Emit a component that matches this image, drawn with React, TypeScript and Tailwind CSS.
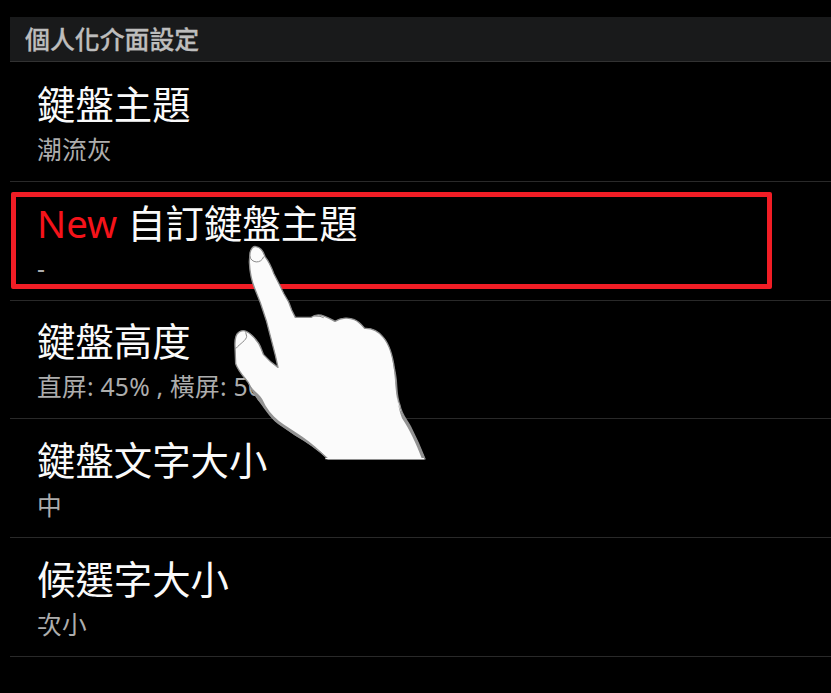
import React from "react";

type Setting = { title: string; summary: string; isNew?: boolean; height: string };

const settings: Setting[] = [
  { title: "鍵盤主題", summary: "潮流灰", height: "h-[120px] pt-[20px]" },
  { title: "自訂鍵盤主題", summary: "-", isNew: true, height: "h-[119px] pt-[19px]" },
  { title: "鍵盤高度", summary: "直屏: 45% , 橫屏: 50%", height: "h-[118px] pt-[18px]" },
  { title: "鍵盤文字大小", summary: "中", height: "h-[119px] pt-[19px]" },
  { title: "候選字大小", summary: "次小", height: "h-[119px] pt-[19px]" },
];

function SettingRow({ title, summary, isNew, height }: Setting) {
  return (
    <li className={`${height} border-b border-[#292929] pl-[27px] whitespace-nowrap`}>
      <div className="h-[45px] text-[38.4px] leading-[45px] text-[#fafafa]">
        {isNew && <span className="text-[#f5131a]">New </span>}
        {title}
      </div>
      <div className="h-[46px] text-[24.7px] leading-[46px] tracking-[0.25px] text-[#adadad]">{summary}</div>
    </li>
  );
}

function PointingHand() {
  return (
    <svg className="absolute left-[200px] top-[230px]" width="240" height="240" viewBox="0 0 720 720">
      <path
        d="M150 68C153 54 160 48 168 50C181 52 190 63 195 80C208 96 216 116 222 132L239 165L252 192L266 216L275 240L286 262L334 262C344 254 359 253 374 259C390 265 398 271 405 274C424 262 448 262 463 269C478 275 486 286 494 295C516 294 535 303 550 322C570 345 579 382 584 420C594 464 586 490 600 526C604 552 620 569 631 589L655 639L675 687L384 687C355 660 325 637 286 615L235 579C211 561 200 537 184 520C166 500 155 479 145 458C130 438 116 425 107 401L105 351C104 333 106 314 116 307C127 298 141 303 152 313C167 326 178 339 184 357L190 373C203 388 217 401 234 412L226 376L212 322L199 272L181 218L165 178C153 150 149 119 148 96Z"
        fill="#fbfbfb"
        stroke="#8e8e8e"
        strokeWidth="4"
        strokeLinejoin="round"
      />
      <path
        d="M146 459C159 484 175 488 187 508C199 535 216 557 237 573C276 603 337 632 383 687C353 660 321 637 286 617L235 583C204 558 190 530 174 510ZM525 298C558 320 573 355 579 399C588 450 583 491 600 539L615 565C639 599 654 638 676 687L666 687C646 636 630 601 606 565C591 526 593 496 588 459C583 401 577 337 525 298Z"
        fill="#929292"
      />
      <path d="M149 77C153 101 184 102 191 80M107 356C121 340 139 331 140 319L137 307M342 258L360 259L371 263" fill="none" stroke="#898989" strokeWidth="3" />
      <path d="M376 684H672V688H376Z" fill="#fbfbfb" />
    </svg>
  );
}

export default function App() {
  return (
    <main className="relative h-[693px] w-[831px] overflow-hidden bg-black pt-[17px] pl-[10px] font-['Noto_Sans','Noto_Sans_CJK_TC',sans-serif]">
      <h1 className="h-[45px] border-b border-[#323232] bg-[#191a1b] pl-[15px] text-[24.9px] leading-[44px] font-medium text-[#bdbdbd] [-webkit-text-stroke:0.3px_#bdbdbd]">
        個人化介面設定
      </h1>
      <ul>
        {settings.map((item) => (
          <SettingRow key={item.title} {...item} />
        ))}
      </ul>
      <div className="absolute left-[11px] top-[192px] h-[97px] w-[761px] rounded-[2px] border-[5px] border-[#f11d25]" />
      <PointingHand />
    </main>
  );
}
